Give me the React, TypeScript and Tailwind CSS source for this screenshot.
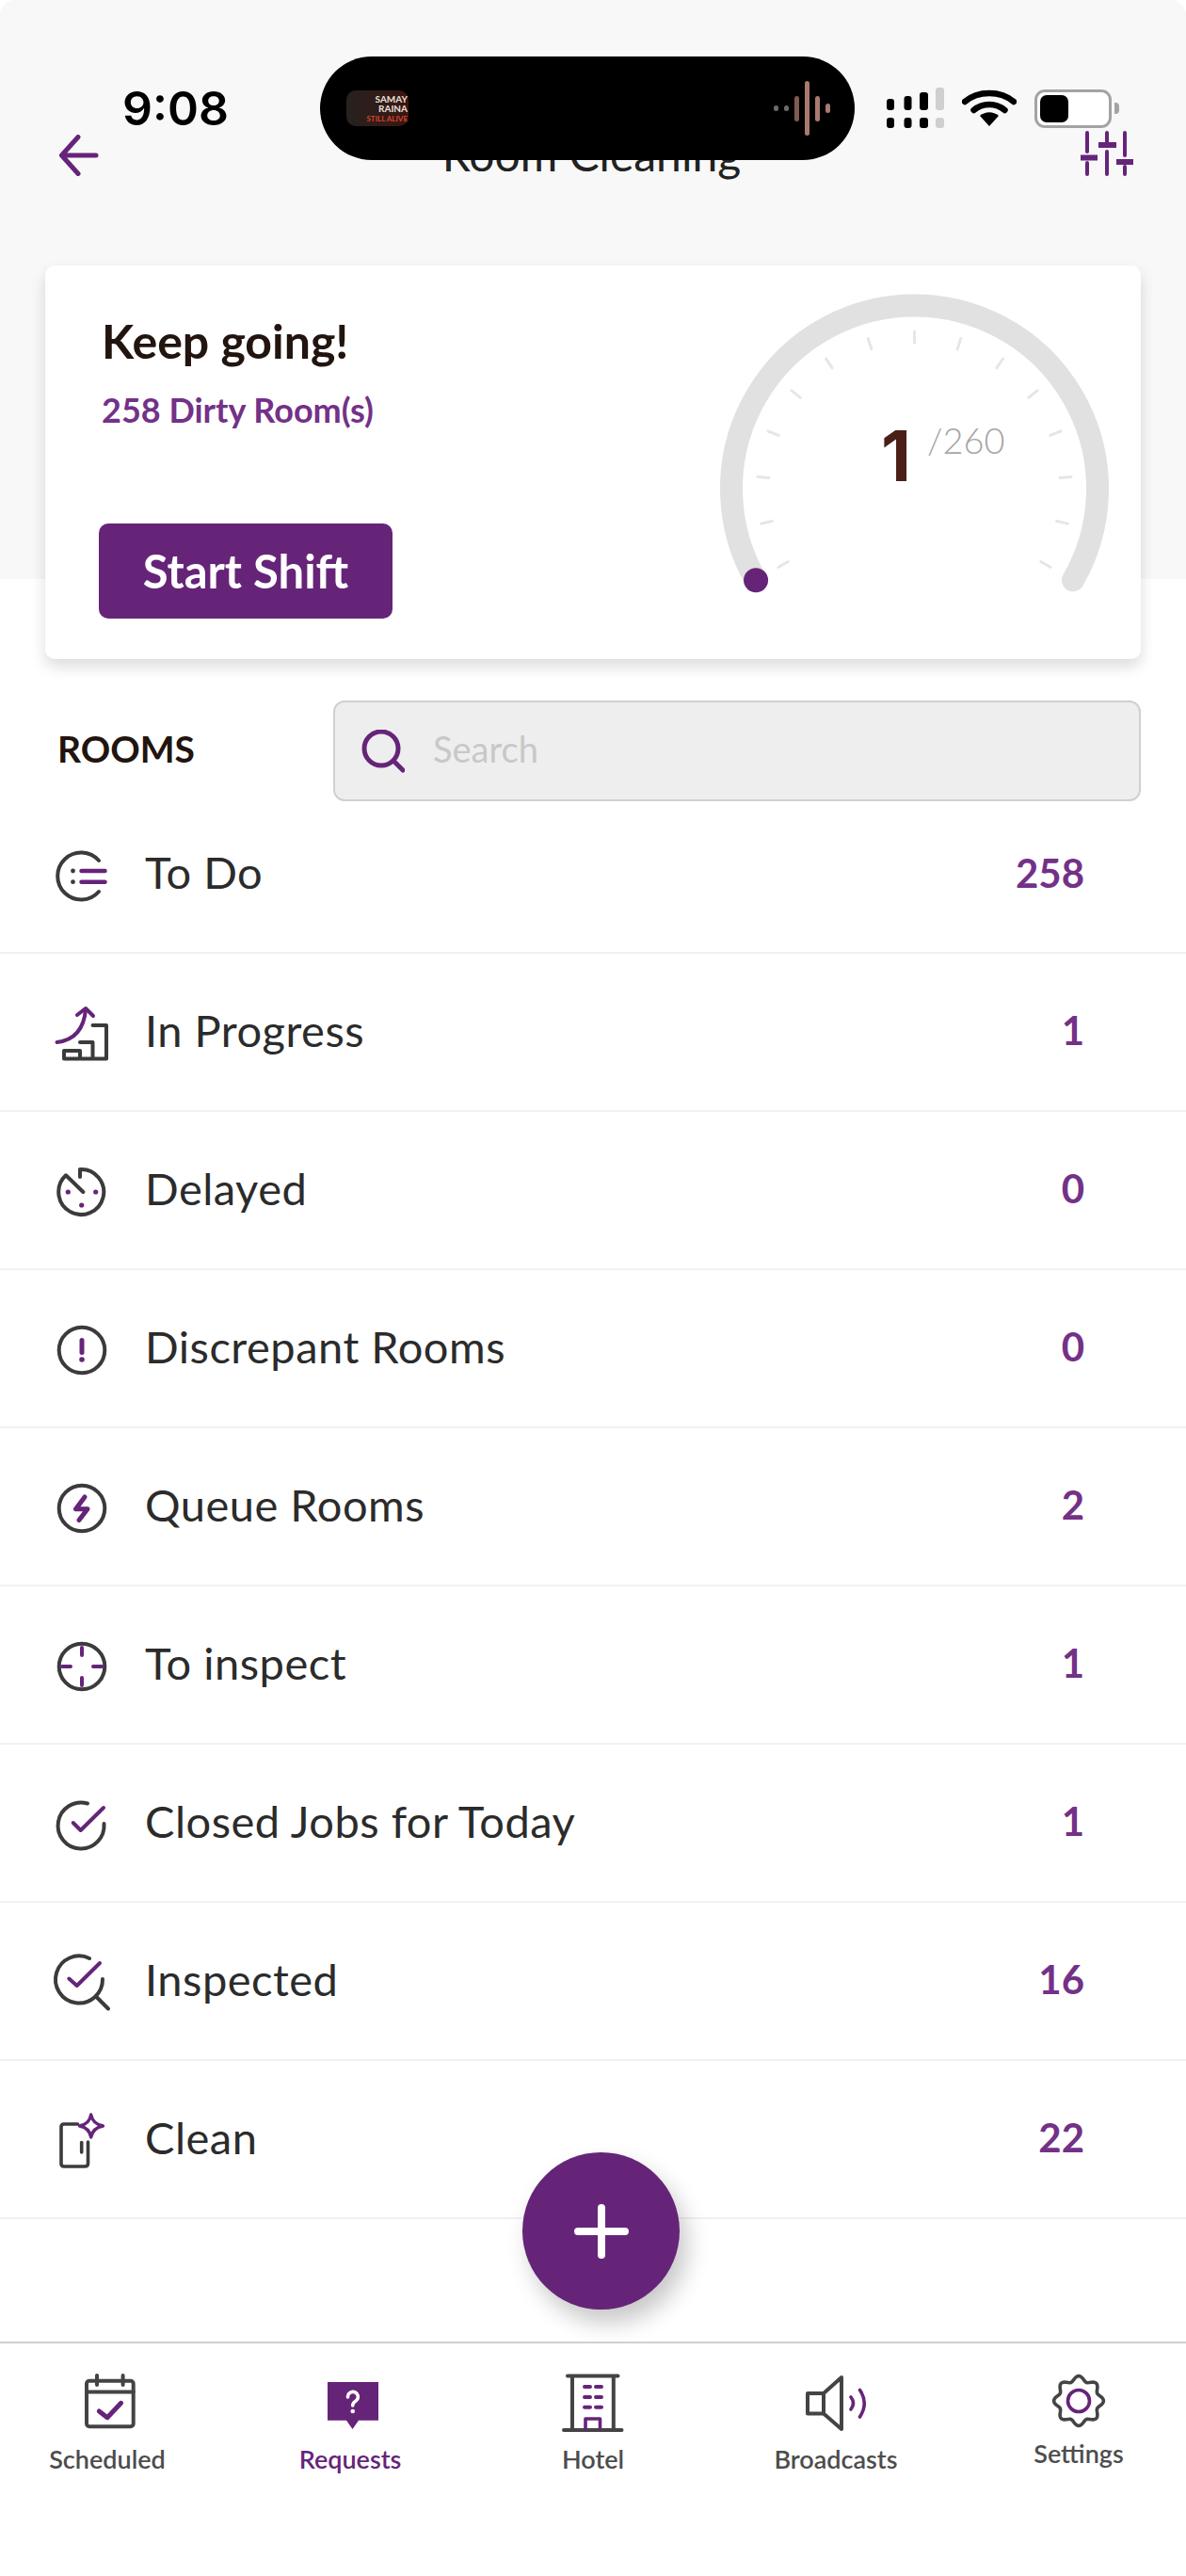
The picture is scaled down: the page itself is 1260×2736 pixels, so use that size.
const PURPLE = "#662479";
const DARK = "#3b3b3b";
const GRAY = "#444444";

const rooms = [
  { label: "To Do", count: 258, icon: <TodoIcon /> },
  { label: "In Progress", count: 1, icon: <ProgressIcon /> },
  { label: "Delayed", count: 0, icon: <DelayedIcon /> },
  { label: "Discrepant Rooms", count: 0, icon: <DiscrepantIcon /> },
  { label: "Queue Rooms", count: 2, icon: <QueueIcon /> },
  { label: "To inspect", count: 1, icon: <InspectIcon /> },
  { label: "Closed Jobs for Today", count: 1, icon: <ClosedIcon /> },
  { label: "Inspected", count: 16, icon: <InspectedIcon /> },
  { label: "Clean", count: 22, icon: <CleanIcon /> },
];

function RowSvg({ children }: { children: React.ReactNode }) {
  return (
    <svg width="60" height="60" viewBox="0 0 60 60" fill="none" strokeLinecap="round" strokeLinejoin="round" className="shrink-0 overflow-visible">
      {children}
    </svg>
  );
}

function TodoIcon() {
  return (
    <RowSvg>
      <path d="M48 15 A25 25 0 1 0 48 48" stroke={DARK} strokeWidth="4" />
      <circle cx="20.5" cy="26" r="2.4" fill={DARK} />
      <circle cx="20.5" cy="37.7" r="2.4" fill={DARK} />
      <path d="M29.5 26 H54.5 M29.5 37.7 H54.5" stroke={PURPLE} strokeWidth="4.5" />
    </RowSvg>
  );
}

function ProgressIcon() {
  return (
    <RowSvg>
      <path d="M3.5 41 C20 39 32 30 34 6" stroke={PURPLE} strokeWidth="4" />
      <path d="M25 12 L34 5 L42 13" stroke={PURPLE} strokeWidth="4" />
      <path d="M11 50 H28 V58.5 H11 Z M28 41 H41.5 V58.5 M41.5 23 H56 V58.5 H28" stroke={DARK} strokeWidth="4" />
    </RowSvg>
  );
}

function DelayedIcon() {
  return (
    <RowSvg>
      <path d="M28 16 V8 A24 24 0 1 1 13 14.3 L31.3 32" stroke={DARK} strokeWidth="4" />
      <circle cx="15.3" cy="32" r="2.6" fill={PURPLE} />
      <circle cx="44.7" cy="32" r="2.6" fill={PURPLE} />
      <circle cx="29.7" cy="46" r="2.6" fill={PURPLE} />
    </RowSvg>
  );
}

function DiscrepantIcon() {
  return (
    <RowSvg>
      <circle cx="30" cy="32" r="24.3" stroke={DARK} strokeWidth="4" />
      <path d="M30 21.5 V34.5" stroke={PURPLE} strokeWidth="5" />
      <circle cx="30" cy="42" r="2.8" fill={PURPLE} />
    </RowSvg>
  );
}

function QueueIcon() {
  return (
    <RowSvg>
      <circle cx="30" cy="32" r="24.3" stroke={DARK} strokeWidth="4" />
      <path d="M33 20 L23.5 32.7 H36 L27 44.5" stroke={PURPLE} strokeWidth="5" />
    </RowSvg>
  );
}

function InspectIcon() {
  return (
    <RowSvg>
      <circle cx="30" cy="32" r="24.3" stroke={DARK} strokeWidth="4" />
      <path d="M30 12 V20 M30 44 V52 M9 32 H18 M42 32 H51" stroke={PURPLE} strokeWidth="4" />
    </RowSvg>
  );
}

function ClosedIcon() {
  return (
    <RowSvg>
      <path d="M36 9.5 A24.5 24.5 0 1 0 53.5 31" stroke={DARK} strokeWidth="4" />
      <path d="M20.7 30 L28.7 38 L53 14" stroke={PURPLE} strokeWidth="4" />
    </RowSvg>
  );
}

function InspectedIcon() {
  return (
    <RowSvg>
      <path d="M38 6 A25 25 0 1 0 52 28 M45.5 47 L58 59.5" stroke={DARK} strokeWidth="4" />
      <path d="M16.3 27.6 L24.7 35 L49 11" stroke={PURPLE} strokeWidth="4" />
    </RowSvg>
  );
}

function CleanIcon() {
  return (
    <RowSvg>
      <path d="M25.5 14 H11 Q8 14 8 17 V56 Q8 59 11 59 H33 Q36.5 59 36.5 56 V33" stroke={DARK} strokeWidth="3.6" />
      <path d="M29.7 33.5 V44" stroke={DARK} strokeWidth="3.6" />
      <path d="M39.7 4 Q41.5 14 52.5 16 Q41.5 18 39.7 28 Q38 18 27.5 16 Q38 14 39.7 4 Z" stroke={PURPLE} strokeWidth="3.4" />
    </RowSvg>
  );
}

function TabSvg({ children }: { children: React.ReactNode }) {
  return (
    <svg width="80" height="64" viewBox="0 0 80 64" fill="none" strokeLinecap="round" strokeLinejoin="round">
      {children}
    </svg>
  );
}

// scalloped gear outline
const gearPath = Array.from({ length: 97 }, (_, i) => {
  const a = (i / 96) * Math.PI * 2;
  const r = 23.8 + 2.6 * Math.cos(8 * a);
  return `${i === 0 ? "M" : "L"}${(40 + r * Math.sin(a)).toFixed(2)} ${(30 - r * Math.cos(a)).toFixed(2)}`;
}).join(" ");

const tabs = [
  {
    label: "Scheduled",
    labelClass: "mt-[10px] text-[#4d4d4d]",
    icon: (
      <TabSvg>
        <rect x="18" y="8.7" width="49.7" height="48.5" rx="3" stroke={GRAY} strokeWidth="4" />
        <path d="M18 20.5 H67.7 M29 3 V13 M56.6 3 V13" stroke={GRAY} strokeWidth="4" />
        <path d="M31.3 41 L40 47.7 L54.6 32.3" stroke={PURPLE} strokeWidth="5" />
      </TabSvg>
    ),
  },
  {
    label: "Requests",
    labelClass: "mt-[10px] text-[#662479]",
    icon: (
      <TabSvg>
        <path d="M16 10 H70 V50.7 H49 L42.5 60 L36 50.7 H16 Z" fill={PURPLE} />
        <path d="M37.5 26 A5.4 5.4 0 1 1 45.5 30.5 C43.4 31.8 42.7 33 42.7 35" stroke="#ffffff" strokeWidth="3.6" />
        <circle cx="42.7" cy="41" r="2.3" fill="#ffffff" />
      </TabSvg>
    ),
  },
  {
    label: "Hotel",
    labelClass: "mt-[10px] text-[#4d4d4d]",
    icon: (
      <TabSvg>
        <path d="M13 3.5 H66.5 M18 3.5 V61 M61.8 3.5 V61 M9 61 H70.5" stroke={GRAY} strokeWidth="4" />
        <path d="M31 15 H37 M43 15 H49 M31 26 H37 M43 26 H49 M31 36.7 H37 M43 36.7 H49" stroke={PURPLE} strokeWidth="4" />
        <path d="M32 60 V49 H47.5 V60" stroke={PURPLE} strokeWidth="3.6" />
      </TabSvg>
    ),
  },
  {
    label: "Broadcasts",
    labelClass: "mt-[10px] text-[#4d4d4d]",
    icon: (
      <TabSvg>
        <path d="M27 22 H10 V43.5 H27 L46 60 V5 Z" stroke={GRAY} strokeWidth="4" />
        <path d="M27 22 V43.5" stroke={GRAY} strokeWidth="4" />
        <path d="M56 26 Q61 32.5 56 39 M65.5 18.5 Q75 32.5 65.5 47" stroke={PURPLE} strokeWidth="3.6" />
      </TabSvg>
    ),
  },
  {
    label: "Settings",
    labelClass: "mt-[4px] text-[#4d4d4d]",
    icon: (
      <TabSvg>
        <path d={gearPath} stroke={GRAY} strokeWidth="3.6" />
        <circle cx="40" cy="30" r="11.5" stroke={PURPLE} strokeWidth="3.6" />
      </TabSvg>
    ),
  },
];

function Gauge() {
  const cx = 209.5;
  const cy = 207;
  const r = 194.5;
  const ticks = Array.from({ length: 15 }, (_, i) => {
    const a = ((-120 + i * (240 / 14)) * Math.PI) / 180;
    const p = (d: number) => [cx + d * Math.sin(a), cy - d * Math.cos(a)];
    const [x1, y1] = p(155);
    const [x2, y2] = p(167);
    return <line key={i} x1={x1} y1={y1} x2={x2} y2={y2} stroke="#e6e6e6" strokeWidth="3" strokeLinecap="round" />;
  });
  const sx = cx + r * Math.sin((-120 * Math.PI) / 180);
  const sy = cy - r * Math.cos((-120 * Math.PI) / 180);
  const ex = cx + r * Math.sin((120 * Math.PI) / 180);
  return (
    <div className="relative w-[416px] h-[330px] shrink-0">
      <svg width="416" height="330" viewBox="0 0 416 330" fill="none">
        <path d={`M${sx} ${sy} A${r} ${r} 0 1 1 ${ex} ${sy}`} stroke="#e1e1e1" strokeWidth="24" strokeLinecap="round" />
        {ticks}
        <circle cx={sx} cy={sy} r="13" fill={PURPLE} />
      </svg>
      <div className="absolute left-[174px] top-[135px] flex items-start">
        <span className="text-[74px] leading-[74px] font-bold text-[#4a1f17] font-['Inter',sans-serif]">1</span>
        <span className="ml-[17px] -mt-[4px] text-[38px] leading-[48px] font-light text-[#a6a6a6]">/260</span>
      </div>
    </div>
  );
}

function StatusIcons() {
  return (
    <div className="flex items-center ml-[34px]">
      <svg width="62" height="44" viewBox="0 0 62 44" className="shrink-0">
        <rect x="0" y="12" width="8" height="12" rx="3" fill="#000" />
        <rect x="18.5" y="9" width="8" height="15" rx="3" fill="#000" />
        <rect x="35" y="5" width="9" height="19" rx="3" fill="#000" />
        <rect x="52" y="0" width="9" height="24" rx="3" fill="#cfcfcf" />
        <rect x="0" y="32" width="8" height="11" rx="3" fill="#000" />
        <rect x="18.5" y="32" width="8" height="11" rx="3" fill="#000" />
        <rect x="35" y="32" width="9" height="11" rx="3" fill="#000" />
        <rect x="52" y="32" width="9" height="11" rx="3" fill="#cfcfcf" />
      </svg>
      <svg width="58" height="40" viewBox="0 0 58 40" fill="none" className="shrink-0 ml-[18px]">
        <path d="M3 13 C17 1 41 1 55 13" stroke="#000" strokeWidth="6.5" strokeLinecap="round" />
        <path d="M12.5 22 C22 14 36 14 45.5 22" stroke="#000" strokeWidth="6.5" strokeLinecap="round" />
        <path d="M19 28 C25 23 33 23 39 28 L29 39 Z" fill="#000" />
      </svg>
      <div className="ml-[19px] w-[82px] h-[41px] rounded-[11px] border-[3px] border-[#a3a3a3] bg-white p-[3px] shrink-0">
        <div className="w-[30px] h-full rounded-[7px] bg-black" />
      </div>
      <div className="ml-[3px] w-[5px] h-[12px] rounded-r-[4px] bg-[#a3a3a3] shrink-0" />
    </div>
  );
}

function IslandPill() {
  const wave = [
    { h: 6, c: "#6b6b6b" },
    { h: 6, c: "#6b6b6b" },
    { h: 27, c: "#7f5a52" },
    { h: 58, c: "#a87a70" },
    { h: 27, c: "#a87a70" },
    { h: 10, c: "#a87a70" },
  ];
  return (
    <div className="relative z-10 flex items-center justify-between w-[568px] h-[110px] rounded-[55px] bg-black pl-[28px] pr-[26px] shrink-0">
      <div className="flex flex-col items-end justify-center w-[66px] h-[38px] rounded-[10px] bg-gradient-to-r from-[#26211f] to-[#3a1512] pr-[1px]">
        <span className="text-[10px] leading-[10px] font-bold text-[#e8e0dc]">SAMAY</span>
        <span className="text-[10px] leading-[11px] font-bold text-[#e8e0dc]">RAINA</span>
        <span className="text-[8px] leading-[10px] font-bold text-[#d8452e]">STILL ALIVE</span>
      </div>
      <div className="flex items-center gap-[6px]">
        {wave.map((b, i) => (
          <div key={i} className="w-[5px] rounded-full" style={{ height: b.h, backgroundColor: b.c }} />
        ))}
      </div>
    </div>
  );
}

export default function App() {
  return (
    <div className="relative w-[1260px] h-[2736px] overflow-hidden bg-white font-['Lato','Liberation_Sans',sans-serif]">
      <div className="h-[615px] rounded-t-[16px] bg-[#f8f8f8] pt-[60px]">
        <div className="flex items-center h-[110px] pl-[130px]">
          <span className="w-[210px] shrink-0 text-[50px] leading-none font-semibold text-black font-['Inter',sans-serif]">9:08</span>
          <IslandPill />
          <StatusIcons />
        </div>
        <div className="flex items-center justify-between h-[50px] -mt-[30px] pl-[63px] pr-[56px]">
          <svg width="42" height="44" viewBox="0 0 42 44" fill="none" stroke={PURPLE} strokeWidth="5" strokeLinecap="round" strokeLinejoin="round">
            <path d="M39 22 H3 M20 2.5 L2.5 22 L20 41.5" />
          </svg>
          <span className="ml-[8px] -mt-[3px] text-[48px] leading-[50px] text-[#222222]">Room Cleaning</span>
          <svg width="60" height="48" viewBox="0 0 60 48" fill="none" stroke={PURPLE} strokeWidth="4" strokeLinecap="round" className="-mt-[4px]">
            <path d="M11 2 V22 M11 34 V46 M32 2 V12 M32 22 V46 M51 2 V26 M51 38 V46" />
            <path d="M4 28.5 H22 M23 15 H42 M42 33 H60" strokeWidth="6" strokeLinecap="butt" />
          </svg>
        </div>
        <div className="flex justify-between mx-[48px] mt-[92px] h-[418px] rounded-[10px] bg-white shadow-[0_8px_16px_rgba(0,0,0,0.14)] pl-[60px] pr-[34px] relative">
          <div className="flex flex-col items-start">
            <h1 className="mt-[48px] text-[50px] leading-[64px] font-bold text-[#22140f]">Keep going!</h1>
            <p className="mt-[19px] text-[36px] leading-[44px] font-bold text-[#733188]">258 Dirty Room(s)</p>
            <button className="mt-[99px] -ml-[3px] w-[312px] h-[101px] rounded-[10px] bg-[#662479] text-[49px] font-bold text-white">Start Shift</button>
          </div>
          <div className="pt-[30px]">
            <Gauge />
          </div>
        </div>
      </div>
      <div className="flex items-center justify-between mt-[129px] pl-[61px] pr-[48px] relative z-10">
        <span className="-mt-[4px] text-[39px] font-bold text-[#22140f]">ROOMS</span>
        <div className="flex items-center w-[858px] h-[107px] rounded-[12px] border-2 border-[#d0d0d0] bg-[#eeeeee] pl-[28px]">
          <svg width="46" height="46" viewBox="0 0 46 46" fill="none" stroke={PURPLE} strokeWidth="5" strokeLinecap="round" className="shrink-0">
            <circle cx="21" cy="20" r="18" />
            <path d="M35 34 L44 43" />
          </svg>
          <span className="ml-[30px] -mt-[4px] text-[38px] text-[#c8c8c8]">Search</span>
        </div>
      </div>
      <ul className="mt-[1px]">
        {rooms.map((room) => (
          <li key={room.label} className="flex items-center h-[168px] border-b-2 border-[#f1f1f1] pl-[57px] pr-[108px] first:h-[161px] first:pb-[6px]">
            {room.icon}
            <span className="ml-[37px] pb-[4px] text-[47px] tracking-[0.5px] text-[#2b2b2b]">{room.label}</span>
            <span className="ml-auto pb-[3px] text-[42px] font-bold text-[#733188]">{room.count}</span>
          </li>
        ))}
      </ul>
      <button className="absolute left-[555px] top-[2286px] flex items-center justify-center w-[167px] h-[167px] rounded-full bg-[#662479] shadow-[8px_14px_24px_rgba(0,0,0,0.22)]">
        <svg width="58" height="58" viewBox="0 0 58 58" stroke="#ffffff" strokeWidth="8" strokeLinecap="round">
          <path d="M29 4 V54 M4 29 H54" />
        </svg>
      </button>
      <nav className="absolute left-0 right-0 top-[2487px] flex justify-center border-t-2 border-[#cfcfcf] pt-[31px]">
        {tabs.map((tab) => (
          <div key={tab.label} className="flex flex-col items-center w-[258px] shrink-0">
            {tab.icon}
            <span className={`${tab.labelClass} text-[27px] leading-[36px] font-semibold`}>{tab.label}</span>
          </div>
        ))}
      </nav>
    </div>
  );
}
